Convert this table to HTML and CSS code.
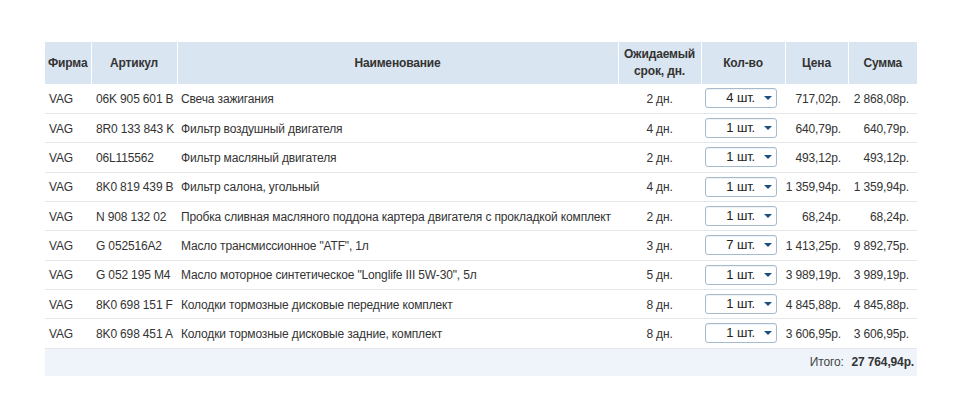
FILE: index.html
```html
<!DOCTYPE html>
<html lang="ru">
<head>
<meta charset="utf-8">
<link rel="stylesheet" href="styles.css">
</head>
<body>
<div class="wrap">
<table class="cart">
  <colgroup>
    <col class="c-firm"><col class="c-art"><col class="c-name"><col class="c-term"><col class="c-qty"><col class="c-price"><col class="c-sum">
  </colgroup>
  <thead>
    <tr>
      <th class="left">Фирма</th>
      <th>Артикул</th>
      <th>Наименование</th>
      <th>Ожидаемый<br>срок, дн.</th>
      <th>Кол-во</th>
      <th>Цена</th>
      <th>Сумма</th>
    </tr>
  </thead>
  <tbody>
    <tr><td>VAG</td><td class="art">06K 905 601 B</td><td>Свеча зажигания</td><td class="term">2 дн.</td><td class="qty"><span class="sel">4 шт.<i class="caret"></i></span></td><td class="num">717,02р.</td><td class="num sum">2 868,08р.</td></tr>
    <tr><td>VAG</td><td class="art">8R0 133 843 K</td><td>Фильтр воздушный двигателя</td><td class="term">4 дн.</td><td class="qty"><span class="sel">1 шт.<i class="caret"></i></span></td><td class="num">640,79р.</td><td class="num sum">640,79р.</td></tr>
    <tr><td>VAG</td><td class="art">06L115562</td><td>Фильтр масляный двигателя</td><td class="term">2 дн.</td><td class="qty"><span class="sel">1 шт.<i class="caret"></i></span></td><td class="num">493,12р.</td><td class="num sum">493,12р.</td></tr>
    <tr><td>VAG</td><td class="art">8K0 819 439 B</td><td>Фильтр салона, угольный</td><td class="term">4 дн.</td><td class="qty"><span class="sel">1 шт.<i class="caret"></i></span></td><td class="num">1 359,94р.</td><td class="num sum">1 359,94р.</td></tr>
    <tr><td>VAG</td><td class="art">N 908 132 02</td><td>Пробка сливная масляного поддона картера двигателя с прокладкой комплект</td><td class="term">2 дн.</td><td class="qty"><span class="sel">1 шт.<i class="caret"></i></span></td><td class="num">68,24р.</td><td class="num sum">68,24р.</td></tr>
    <tr><td>VAG</td><td class="art">G 052516A2</td><td>Масло трансмиссионное "ATF", 1л</td><td class="term">3 дн.</td><td class="qty"><span class="sel">7 шт.<i class="caret"></i></span></td><td class="num">1 413,25р.</td><td class="num sum">9 892,75р.</td></tr>
    <tr><td>VAG</td><td class="art">G 052 195 M4</td><td>Масло моторное синтетическое "Longlife III 5W-30", 5л</td><td class="term">5 дн.</td><td class="qty"><span class="sel">1 шт.<i class="caret"></i></span></td><td class="num">3 989,19р.</td><td class="num sum">3 989,19р.</td></tr>
    <tr><td>VAG</td><td class="art">8K0 698 151 F</td><td>Колодки тормозные дисковые передние комплект</td><td class="term">8 дн.</td><td class="qty"><span class="sel">1 шт.<i class="caret"></i></span></td><td class="num">4 845,88р.</td><td class="num sum">4 845,88р.</td></tr>
    <tr><td>VAG</td><td class="art">8K0 698 451 A</td><td>Колодки тормозные дисковые задние, комплект</td><td class="term">8 дн.</td><td class="qty"><span class="sel">1 шт.<i class="caret"></i></span></td><td class="num">3 606,95р.</td><td class="num sum">3 606,95р.</td></tr>
  </tbody>
  <tfoot>
    <tr><td colspan="7" class="total"><span class="total-label">Итого:</span><b>27 764,94р.</b></td></tr>
  </tfoot>
</table>
</div>
</body>
</html>
```

FILE: styles.css
```css
html, body {
  margin: 0;
  padding: 0;
  background: #fff;
}
body {
  font-family: "Liberation Sans", Arial, sans-serif;
  font-size: 12px;
  color: #333;
  letter-spacing: -0.15px;
}
.wrap {
  padding: 42px 0 0 45px;
}
.cart {
  width: 872px;
  table-layout: fixed;
  border-collapse: collapse;
}
.c-firm { width: 46px; }
.c-art { width: 86px; }
.c-name { width: 441px; }
.c-term { width: 83px; }
.c-qty { width: 84px; }
.c-price { width: 63px; }
.c-sum { width: 69px; }

.cart th {
  background: #d9e5f1;
  height: 42px;
  padding: 0;
  font-weight: bold;
  color: #333;
  line-height: 17px;
  text-align: center;
  vertical-align: middle;
  border-left: 1px solid #fff;
}
.cart th.left {
  text-align: left;
  padding-left: 3px;
  border-left: none;
}
.cart td {
  padding: 1px 0 0 4px;
  box-sizing: border-box;
  border-bottom: 1px solid #e3e7eb;
  white-space: nowrap;
  vertical-align: middle;
  line-height: 14px;
}
.cart tbody td {
  height: 29.35px;
}
.cart td.art {
  padding-left: 5px;
}
.cart td.term {
  text-align: center;
  padding: 1px 0 0 0;
}
.cart td.qty {
  padding: 0 0 0 4px;
}
.cart td.num {
  text-align: right;
  padding: 1px 7px 0 0;
}
.cart td.sum {
  padding-right: 8px;
}
.sel {
  display: flex;
  align-items: center;
  justify-content: flex-end;
  box-sizing: border-box;
  width: 72px;
  height: 20px;
  padding-right: 4px;
  border: 1px solid #a7bbcf;
  border-radius: 3px;
  background: #fff;
  box-shadow: inset 0 1px 1px rgba(0, 0, 0, 0.06);
  font-size: 13px;
  color: #222;
}
.caret {
  width: 0;
  height: 0;
  margin-left: 9px;
  border-left: 4px solid transparent;
  border-right: 4px solid transparent;
  border-top: 4px solid #1d4e80;
}
.cart tfoot td {
  background: #eef4fa;
  height: 28px;
  border-bottom: none;
  text-align: right;
  padding: 0 3px 0 0;
}
.total-label {
  color: #444;
  margin-right: 8px;
}
.total b {
  color: #333;
}
```
